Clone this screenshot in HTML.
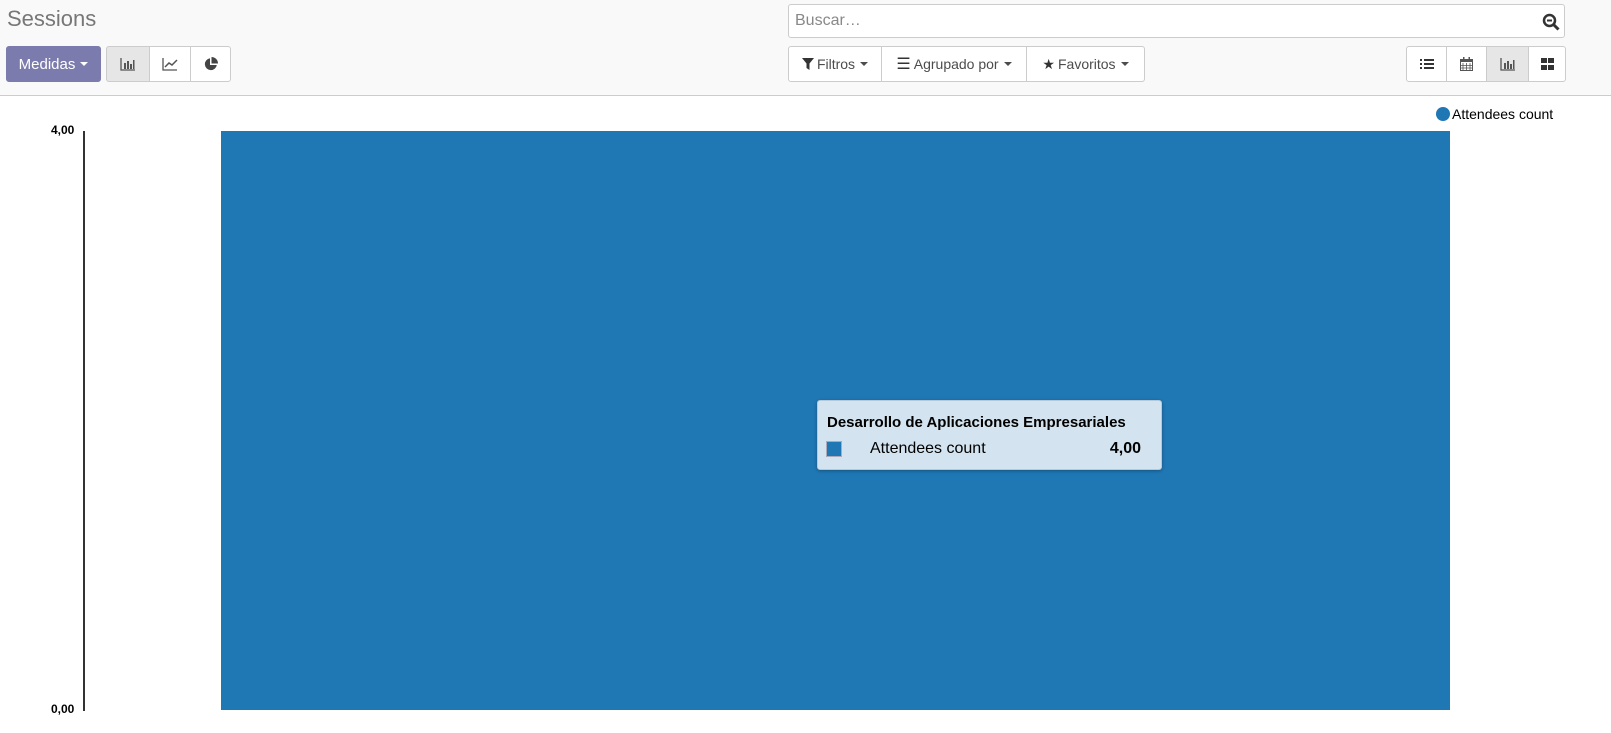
<!DOCTYPE html>
<html><head><meta charset="utf-8"><style>
*{box-sizing:border-box;margin:0;padding:0}
body{width:1611px;height:733px;overflow:hidden;background:#fff;font-family:"Liberation Sans",Arial,sans-serif;color:#4c4c4c;position:relative}
.hdr{position:absolute;left:0;top:0;width:1611px;height:96px;background:#f9f9f9;border-bottom:1px solid #ccc}
.title{position:absolute;left:7px;top:6px;font-size:22px;color:#777}
.btn{position:absolute;height:36px;border:1px solid #ccc;background:#fff;display:flex;align-items:center;justify-content:center;font-size:14px;color:#4c4c4c}
.car{display:inline-block;width:0;height:0;border-left:4px solid transparent;border-right:4px solid transparent;border-top:4px solid currentColor;margin-left:5px;vertical-align:middle}
.search{position:absolute;left:788px;top:4px;width:777px;height:34px;border:1px solid #ccc;border-radius:3px;background:#fff;font-size:16px;color:#888;padding:7px 6px}
.axis{position:absolute;left:83px;top:131px;width:2px;height:580px;background:#333}
.bar{position:absolute;left:221px;top:131px;width:1229px;height:579px;background:#1f77b4}
.tt{position:absolute;left:817px;top:400px;width:345px;height:70px;background:#d3e3ef;border:1px solid #b7c8d6;border-radius:3px;box-shadow:0 1px 3px rgba(0,0,0,.3);color:#000;font-size:16px}
</style></head><body>
<div class="hdr">
<div class="title">Sessions</div>
<div class="btn" style="left:6px;top:46px;width:95px;background:#7c7bad;border-color:#7c7bad;color:#fff;border-radius:3px;font-size:15px">Medidas<span class="car"></span></div>
<div class="btn" style="left:106px;top:46px;width:44px;background:#e6e6e6;border-radius:3px 0 0 3px">
<svg width="16" height="14" viewBox="0 0 16 14"><path d="M1 1v12h14" stroke="#555" fill="none" stroke-width="1.3"/><rect x="4" y="6" width="2" height="6" fill="#555"/><rect x="7" y="4" width="2" height="8" fill="#555"/><rect x="10" y="7" width="2" height="5" fill="#555"/><rect x="13" y="3" width="1.5" height="9" fill="#555"/></svg></div>
<div class="btn" style="left:149px;top:46px;width:42px">
<svg width="16" height="14" viewBox="0 0 16 14"><path d="M1 1v12h14" stroke="#555" fill="none" stroke-width="1.3"/><path d="M3 10l4-4 3 2 5-5" stroke="#555" fill="none" stroke-width="1.5"/></svg></div>
<div class="btn" style="left:190px;top:46px;width:41px;border-radius:0 3px 3px 0">
<svg width="14" height="14" viewBox="0 0 14 14"><path d="M6 1.2A6 6 0 1 0 12.8 8H6z" fill="#444"/><path d="M7.5 0v6.5H14A6.5 6.5 0 0 0 7.5 0z" fill="#444"/></svg></div>
<div class="search">Buscar…
<svg style="position:absolute;right:4px;top:8px" width="18" height="18" viewBox="0 0 18 18"><circle cx="7.5" cy="7.5" r="5.5" stroke="#333" stroke-width="2.5" fill="none"/><path d="M5 7.5h5" stroke="#333" stroke-width="2"/><path d="M11.5 11.5l5 5" stroke="#333" stroke-width="3"/></svg></div>
<div class="btn" style="left:788px;top:46px;width:94px;border-radius:3px 0 0 3px"><svg width="12" height="12" viewBox="0 0 12 12" style="margin-right:3px"><path d="M0 0h12L7.5 5.5V12L4.5 10V5.5z" fill="#333"/></svg>Filtros<span class="car"></span></div>
<div class="btn" style="left:881px;top:46px;width:146px"><span style="font-size:16px;margin-right:3px;color:#333">☰</span>Agrupado por<span class="car"></span></div>
<div class="btn" style="left:1026px;top:46px;width:119px;border-radius:0 3px 3px 0"><span style="margin-right:3px;color:#333">★</span>Favoritos<span class="car"></span></div>
<div class="btn" style="left:1406px;top:46px;width:41px;border-radius:3px 0 0 3px"><svg width="14" height="12" viewBox="0 0 14 12"><g fill="#333"><rect x="0" y="1" width="2" height="2"/><rect x="0" y="5" width="2" height="2"/><rect x="0" y="9" width="2" height="2"/><rect x="4" y="1" width="10" height="2"/><rect x="4" y="5" width="10" height="2"/><rect x="4" y="9" width="10" height="2"/></g></svg></div>
<div class="btn" style="left:1446px;top:46px;width:41px"><svg width="13" height="14" viewBox="0 0 13 14"><rect x=".5" y="2.5" width="12" height="11" fill="none" stroke="#555"/><rect x="0" y="2" width="13" height="3" fill="#555"/><path d="M3 6v7M6.5 6v7M10 6v7M1 8.5h11M1 11h11" stroke="#555" stroke-width=".8"/><rect x="3" y="0" width="1.5" height="3" fill="#555"/><rect x="8.5" y="0" width="1.5" height="3" fill="#555"/></svg></div>
<div class="btn" style="left:1486px;top:46px;width:43px;background:#e6e6e6"><svg width="16" height="14" viewBox="0 0 16 14"><path d="M1 1v12h14" stroke="#555" fill="none" stroke-width="1.3"/><rect x="4" y="6" width="2" height="6" fill="#555"/><rect x="7" y="4" width="2" height="8" fill="#555"/><rect x="10" y="7" width="2" height="5" fill="#555"/><rect x="13" y="3" width="1.5" height="9" fill="#555"/></svg></div>
<div class="btn" style="left:1528px;top:46px;width:38px;border-radius:0 3px 3px 0"><svg width="13" height="12" viewBox="0 0 13 12"><g fill="#333"><rect x="0" y="0" width="6" height="5"/><rect x="7" y="0" width="6" height="5"/><rect x="0" y="7" width="6" height="5"/><rect x="7" y="7" width="6" height="5"/></g></svg></div>
</div>
<div style="position:absolute;left:1436px;top:106px;font-size:14px;color:#000;display:flex;align-items:center"><span style="width:14px;height:14px;border-radius:50%;background:#1f77b4;display:inline-block;margin-right:2px"></span>Attendees count</div>
<div style="position:absolute;left:51px;top:123px;font-size:12px;font-weight:bold;color:#000">4,00</div>
<div style="position:absolute;left:51px;top:702px;font-size:12px;font-weight:bold;color:#000">0,00</div>
<div class="axis"></div>
<div class="bar"></div>
<div class="tt">
<div style="position:absolute;left:9px;top:13px;font-weight:bold;font-size:15px">Desarrollo de Aplicaciones Empresariales</div>
<div style="position:absolute;left:8px;top:40px;width:16px;height:16px;background:#1f77b4;border:1px solid #aab"></div>
<div style="position:absolute;left:52px;top:39px">Attendees count</div>
<div style="position:absolute;right:20px;top:39px;font-weight:bold">4,00</div>
</div>
</body></html>
